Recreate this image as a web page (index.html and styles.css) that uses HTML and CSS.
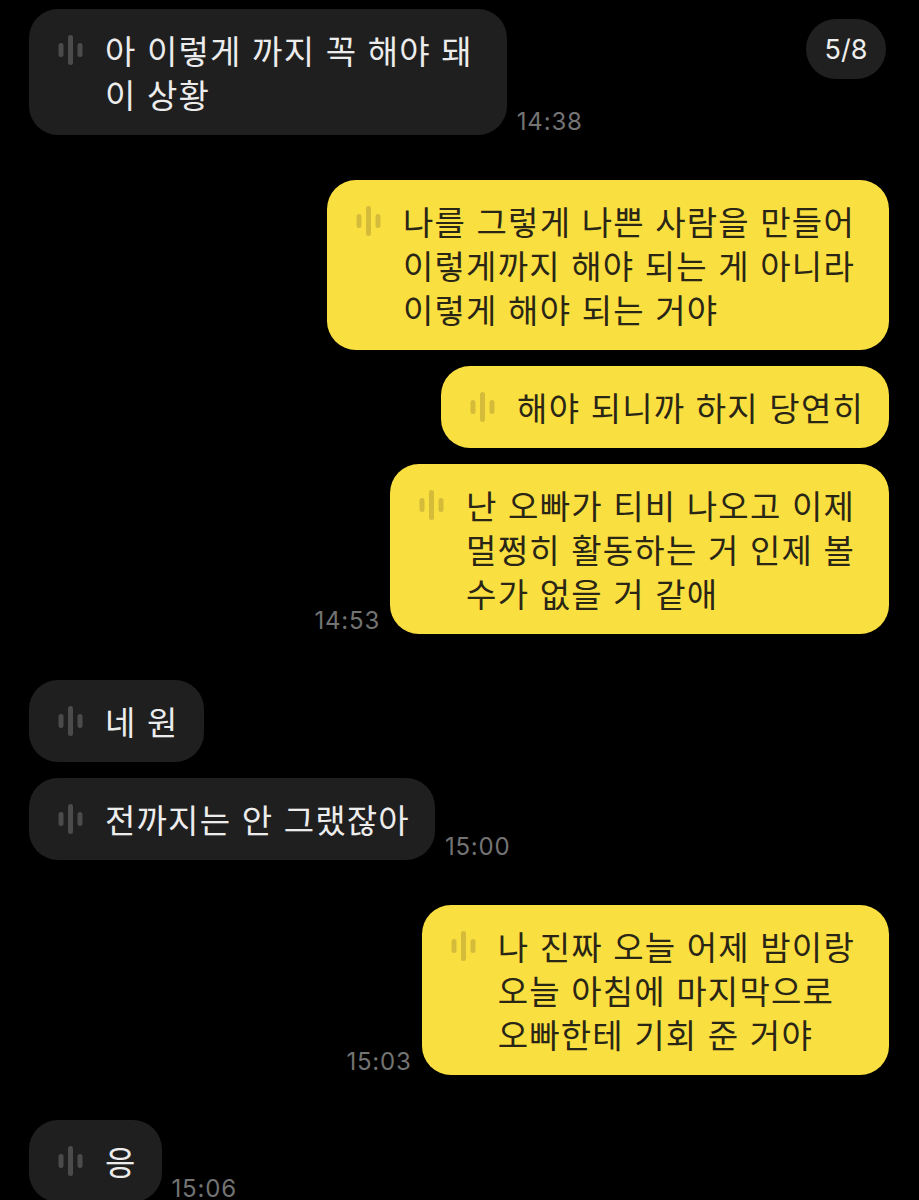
FILE: index.html
```html
<!DOCTYPE html>
<html lang="ko">
<head>
<meta charset="UTF-8" />
<title>대화</title>
<link rel="stylesheet" href="styles.css">
</head>
<body>

<div class="counter">5/8</div>

<div class="chat">
  <div class="group">
    <div class="row">
      <div class="bubble in multi">
        <svg class="wave" viewBox="0 0 24 30"><rect x="0" y="8" width="5" height="14" rx="2.5"/><rect x="9.5" y="0" width="5" height="30" rx="2.5"/><rect x="19" y="8" width="5" height="14" rx="2.5"/></svg>
        <p>아 이렇게 까지 꼭 해야 돼<br>이 상황</p>
      </div>
      <span class="time">14:38</span>
    </div>
  </div>

  <div class="group">
    <div class="row out">
      <div class="bubble multi">
        <svg class="wave" viewBox="0 0 24 30"><rect x="0" y="8" width="5" height="14" rx="2.5"/><rect x="9.5" y="0" width="5" height="30" rx="2.5"/><rect x="19" y="8" width="5" height="14" rx="2.5"/></svg>
        <p>나를 그렇게 나쁜 사람을 만들어<br>이렇게까지 해야 되는 게 아니라<br>이렇게 해야 되는 거야</p>
      </div>
    </div>
    <div class="row out">
      <div class="bubble">
        <svg class="wave" viewBox="0 0 24 30"><rect x="0" y="8" width="5" height="14" rx="2.5"/><rect x="9.5" y="0" width="5" height="30" rx="2.5"/><rect x="19" y="8" width="5" height="14" rx="2.5"/></svg>
        <p>해야 되니까 하지 당연히</p>
      </div>
    </div>
    <div class="row out">
      <span class="time">14:53</span>
      <div class="bubble multi">
        <svg class="wave" viewBox="0 0 24 30"><rect x="0" y="8" width="5" height="14" rx="2.5"/><rect x="9.5" y="0" width="5" height="30" rx="2.5"/><rect x="19" y="8" width="5" height="14" rx="2.5"/></svg>
        <p>난 오빠가 티비 나오고 이제<br>멀쩡히 활동하는 거 인제 볼<br>수가 없을 거 같애</p>
      </div>
    </div>
  </div>

  <div class="group next">
    <div class="row">
      <div class="bubble in">
        <svg class="wave" viewBox="0 0 24 30"><rect x="0" y="8" width="5" height="14" rx="2.5"/><rect x="9.5" y="0" width="5" height="30" rx="2.5"/><rect x="19" y="8" width="5" height="14" rx="2.5"/></svg>
        <p>네 원</p>
      </div>
    </div>
    <div class="row">
      <div class="bubble in">
        <svg class="wave" viewBox="0 0 24 30"><rect x="0" y="8" width="5" height="14" rx="2.5"/><rect x="9.5" y="0" width="5" height="30" rx="2.5"/><rect x="19" y="8" width="5" height="14" rx="2.5"/></svg>
        <p>전까지는 안 그랬잖아</p>
      </div>
      <span class="time">15:00</span>
    </div>
  </div>

  <div class="group">
    <div class="row out">
      <span class="time">15:03</span>
      <div class="bubble multi">
        <svg class="wave" viewBox="0 0 24 30"><rect x="0" y="8" width="5" height="14" rx="2.5"/><rect x="9.5" y="0" width="5" height="30" rx="2.5"/><rect x="19" y="8" width="5" height="14" rx="2.5"/></svg>
        <p>나 진짜 오늘 어제 밤이랑<br>오늘 아침에 마지막으로<br>오빠한테 기회 준 거야</p>
      </div>
    </div>
  </div>

  <div class="group">
    <div class="row">
      <div class="bubble in">
        <svg class="wave" viewBox="0 0 24 30"><rect x="0" y="8" width="5" height="14" rx="2.5"/><rect x="9.5" y="0" width="5" height="30" rx="2.5"/><rect x="19" y="8" width="5" height="14" rx="2.5"/></svg>
        <p>응</p>
      </div>
      <span class="time">15:06</span>
    </div>
  </div>
</div>

</body>
</html>
```

FILE: styles.css
```css
html, body {
  height: 1200px;
  overflow: hidden;
}
body {
  margin: 0;
  background: #000;
  font-family: "Noto Sans CJK KR", "Noto Sans", sans-serif;
  position: relative;
}
.chat {
  display: flex;
  flex-direction: column;
  gap: 45px;
  padding: 9px 30px 0 29px;
}
.group {
  display: flex;
  flex-direction: column;
  gap: 16px;
}
.group.next {
  margin-top: 1px;
}
.row {
  display: flex;
  align-items: flex-end;
  gap: 10px;
}
.row.out {
  justify-content: flex-end;
}
.bubble {
  display: flex;
  align-items: flex-start;
  gap: 22px;
  padding: 19px 25px 19px 29px;
  border-radius: 29px;
  background: #fadf40;
  color: #2a2616;
}
.bubble.multi {
  padding-right: 34px;
}
.bubble.in {
  background: #1f1f20;
  color: #ececec;
}
.bubble p {
  margin: 0;
  font-size: 33px;
  line-height: 44px;
  letter-spacing: 1.2px;
  font-weight: 400;
  white-space: nowrap;
}
.wave {
  width: 25px;
  height: 30px;
  margin-top: 7px;
  flex: none;
  fill: #d5bb3a;
}
.in .wave {
  fill: #4b4b4c;
}
.time {
  font-family: Inter, "Liberation Sans", sans-serif;
  font-size: 24px;
  line-height: 18px;
  letter-spacing: 0.8px;
  margin-bottom: 4px;
  color: #737373;
}
.counter {
  position: absolute;
  top: 19px;
  right: 33px;
  width: 80px;
  height: 60px;
  border-radius: 30px;
  background: #202021;
  color: #eee;
  font-family: Inter, "Liberation Sans", sans-serif;
  font-size: 27px;
  display: flex;
  align-items: center;
  justify-content: center;
}
```
